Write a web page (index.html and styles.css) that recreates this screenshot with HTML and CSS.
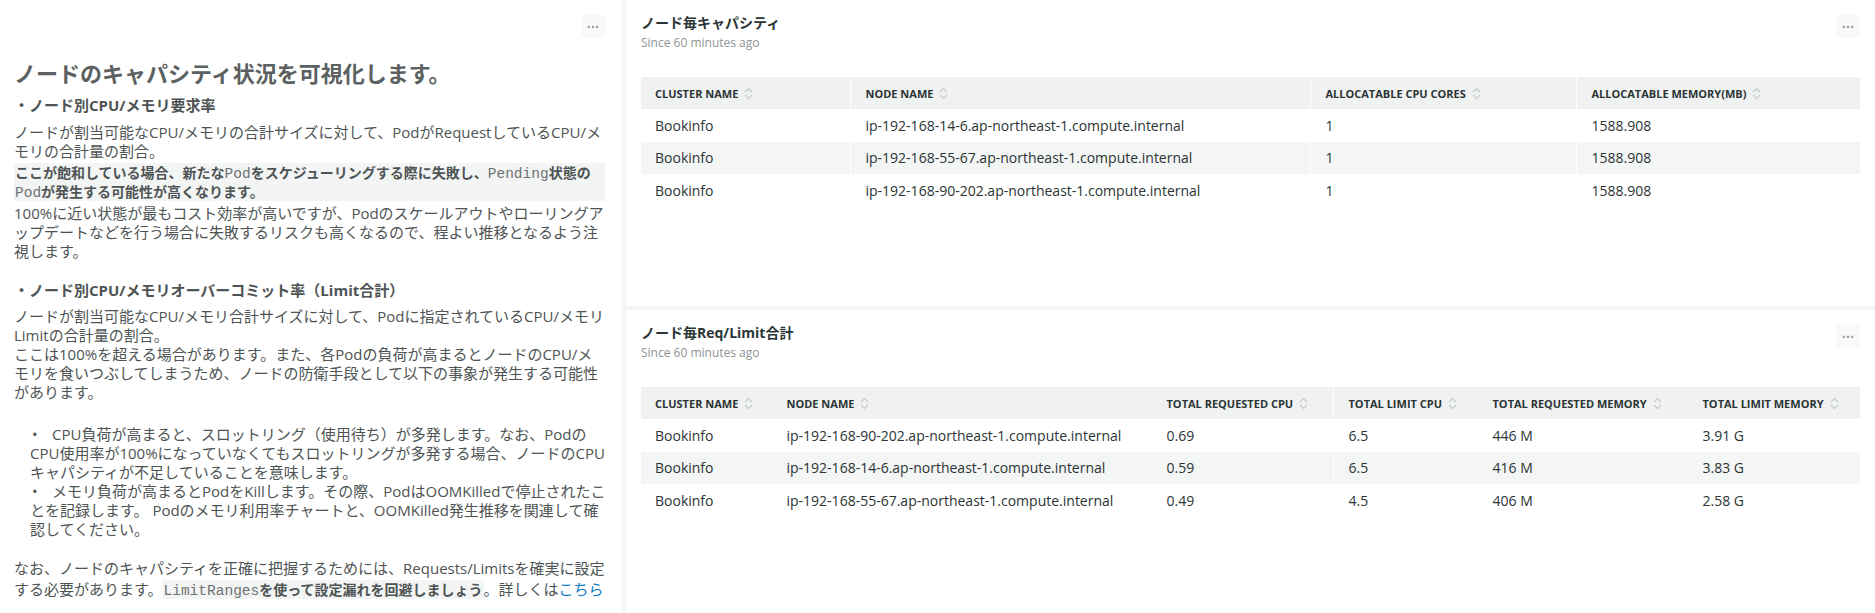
FILE: index.html
```html
<!DOCTYPE html>
<html lang="ja">
<head>
<meta charset="utf-8">
<title>Node capacity</title>
<link rel="stylesheet" href="styles.css">
</head>
<body>
<div class="dash">
  <section class="panel panel-left">
    <div class="left-head">
      <button class="more" type="button" aria-label="more"><svg width="24" height="24" viewBox="0 0 24 24"><rect x="6.8" y="11.8" width="2.2" height="2.2" fill="#9aa0a0"/><rect x="10.9" y="11.8" width="2.2" height="2.2" fill="#9aa0a0"/><rect x="15" y="11.8" width="2.2" height="2.2" fill="#9aa0a0"/></svg></button>
    </div>
    <div class="md">
      <h1 class="md-h1">ノードのキャパシティ状況を可視化します。</h1>
      <p class="md-strong md-sec1">・ノード別CPU/メモリ要求率</p>
      <p class="md-p md-p1">ノードが割当可能なCPU/メモリの合計サイズに対して、PodがRequestしているCPU/メモリの合計量の割合。</p>
      <div class="md-block">ここが飽和している場合、新たな<code class="mono">Pod</code>をスケジューリングする際に失敗し、<code class="mono">Pending</code>状態の<code class="mono">Pod</code>が発生する可能性が高くなります。</div>
      <p class="md-p md-p2">100%に近い状態が最もコスト効率が高いですが、Podのスケールアウトやローリングアップデートなどを行う場合に失敗するリスクも高くなるので、程よい推移となるよう注視します。</p>
      <p class="md-strong md-sec2">・ノード別CPU/メモリオーバーコミット率（Limit合計）</p>
      <p class="md-p md-p3">ノードが割当可能なCPU/メモリ合計サイズに対して、Podに指定されているCPU/メモリLimitの合計量の割合。<br>ここは100%を超える場合があります。また、各Podの負荷が高まるとノードのCPU/メモリを食いつぶしてしまうため、ノードの防衛手段として以下の事象が発生する可能性があります。</p>
      <ul class="md-list">
        <li>CPU負荷が高まると、スロットリング（使用待ち）が多発します。なお、PodのCPU使用率が100%になっていなくてもスロットリングが多発する場合、ノードのCPUキャパシティが不足していることを意味します。</li>
        <li>メモリ負荷が高まるとPodをKillします。その際、PodはOOMKilledで停止されたことを記録します。 Podのメモリ利用率チャートと、OOMKilled発生推移を関連して確認してください。</li>
      </ul>
      <p class="md-p md-p4">なお、ノードのキャパシティを正確に把握するためには、Requests/Limitsを確実に設定する必要があります。<span class="md-inline"><code class="mono">LimitRanges</code>を使って設定漏れを回避しましょう</span>。詳しくは<a class="md-link" href="#">こちら</a></p>
    </div>
  </section>

  <div class="right-col">
    <section class="panel panel-widget">
      <header class="widget-head">
        <div class="widget-titles">
          <h2 class="widget-title">ノード毎キャパシティ</h2>
          <div class="widget-since">Since 60 minutes ago</div>
        </div>
        <button class="more" type="button" aria-label="more"><svg width="24" height="24" viewBox="0 0 24 24"><rect x="6.8" y="11.8" width="2.2" height="2.2" fill="#9aa0a0"/><rect x="10.9" y="11.8" width="2.2" height="2.2" fill="#9aa0a0"/><rect x="15" y="11.8" width="2.2" height="2.2" fill="#9aa0a0"/></svg></button>
      </header>
      <table class="data-table">
        <colgroup><col class="c209"><col class="c460"><col class="c266"><col></colgroup>
        <thead>
          <tr>
            <th class="div-none"><span class="th-in">Cluster name<svg class="sort" width="9" height="13" viewBox="0 0 9 13"><path d="M1 5 L4.5 1.5 L8 5" /><path d="M1 8 L4.5 11.5 L8 8" /></svg></span></th>
            <th><span class="th-in">Node name<svg class="sort" width="9" height="13" viewBox="0 0 9 13"><path d="M1 5 L4.5 1.5 L8 5" /><path d="M1 8 L4.5 11.5 L8 8" /></svg></span></th>
            <th><span class="th-in">Allocatable CPU cores<svg class="sort" width="9" height="13" viewBox="0 0 9 13"><path d="M1 5 L4.5 1.5 L8 5" /><path d="M1 8 L4.5 11.5 L8 8" /></svg></span></th>
            <th><span class="th-in">Allocatable memory(MB)<svg class="sort" width="9" height="13" viewBox="0 0 9 13"><path d="M1 5 L4.5 1.5 L8 5" /><path d="M1 8 L4.5 11.5 L8 8" /></svg></span></th>
          </tr>
        </thead>
        <tbody>
          <tr><td>Bookinfo</td><td>ip-192-168-14-6.ap-northeast-1.compute.internal</td><td>1</td><td>1588.908</td></tr>
          <tr><td>Bookinfo</td><td>ip-192-168-55-67.ap-northeast-1.compute.internal</td><td>1</td><td>1588.908</td></tr>
          <tr><td>Bookinfo</td><td>ip-192-168-90-202.ap-northeast-1.compute.internal</td><td>1</td><td>1588.908</td></tr>
        </tbody>
      </table>
    </section>

    <section class="panel panel-widget">
      <header class="widget-head">
        <div class="widget-titles">
          <h2 class="widget-title">ノード毎Req/Limit合計</h2>
          <div class="widget-since">Since 60 minutes ago</div>
        </div>
        <button class="more" type="button" aria-label="more"><svg width="24" height="24" viewBox="0 0 24 24"><rect x="6.8" y="11.8" width="2.2" height="2.2" fill="#9aa0a0"/><rect x="10.9" y="11.8" width="2.2" height="2.2" fill="#9aa0a0"/><rect x="15" y="11.8" width="2.2" height="2.2" fill="#9aa0a0"/></svg></button>
      </header>
      <table class="data-table">
        <colgroup><col class="c130"><col class="c380"><col class="c182"><col class="c144"><col class="c210"><col></colgroup>
        <thead>
          <tr>
            <th><span class="th-in">Cluster name<svg class="sort" width="9" height="13" viewBox="0 0 9 13"><path d="M1 5 L4.5 1.5 L8 5" /><path d="M1 8 L4.5 11.5 L8 8" /></svg></span></th>
            <th class="div-none"><span class="th-in">Node name<svg class="sort" width="9" height="13" viewBox="0 0 9 13"><path d="M1 5 L4.5 1.5 L8 5" /><path d="M1 8 L4.5 11.5 L8 8" /></svg></span></th>
            <th class="div-none"><span class="th-in">Total requested CPU<svg class="sort" width="9" height="13" viewBox="0 0 9 13"><path d="M1 5 L4.5 1.5 L8 5" /><path d="M1 8 L4.5 11.5 L8 8" /></svg></span></th>
            <th><span class="th-in">Total limit CPU<svg class="sort" width="9" height="13" viewBox="0 0 9 13"><path d="M1 5 L4.5 1.5 L8 5" /><path d="M1 8 L4.5 11.5 L8 8" /></svg></span></th>
            <th class="div-none"><span class="th-in">Total requested memory<svg class="sort" width="9" height="13" viewBox="0 0 9 13"><path d="M1 5 L4.5 1.5 L8 5" /><path d="M1 8 L4.5 11.5 L8 8" /></svg></span></th>
            <th class="div-none"><span class="th-in">Total limit memory<svg class="sort" width="9" height="13" viewBox="0 0 9 13"><path d="M1 5 L4.5 1.5 L8 5" /><path d="M1 8 L4.5 11.5 L8 8" /></svg></span></th>
          </tr>
        </thead>
        <tbody>
          <tr><td>Bookinfo</td><td class="div-none">ip-192-168-90-202.ap-northeast-1.compute.internal</td><td class="div-none">0.69</td><td>6.5</td><td class="div-none">446 M</td><td class="div-none">3.91 G</td></tr>
          <tr><td>Bookinfo</td><td class="div-none">ip-192-168-14-6.ap-northeast-1.compute.internal</td><td class="div-none">0.59</td><td>6.5</td><td class="div-none">416 M</td><td class="div-none">3.83 G</td></tr>
          <tr><td>Bookinfo</td><td class="div-none">ip-192-168-55-67.ap-northeast-1.compute.internal</td><td class="div-none">0.49</td><td>4.5</td><td class="div-none">406 M</td><td class="div-none">2.58 G</td></tr>
        </tbody>
      </table>
    </section>
  </div>
</div>
</body>
</html>
```

FILE: styles.css
```css
* { box-sizing: border-box; }

html, body {
  margin: 0;
  padding: 0;
  background: #f4f5f5;
  font-family: "Open Sans", "Noto Sans CJK JP", sans-serif;
}

.dash {
  display: grid;
  grid-template-columns: 622px 1fr;
  column-gap: 4px;
  width: 1875px;
  height: 613px;
}

.panel {
  background: #ffffff;
}

.right-col {
  display: grid;
  grid-template-rows: 306px 1fr;
  row-gap: 4px;
}

/* ---------- left markdown panel ---------- */
.panel-left {
  padding: 14px 17px 0 14px;
  overflow: hidden;
}

.left-head {
  display: flex;
  justify-content: flex-end;
  height: 24px;
}

.more {
  width: 24px;
  height: 24px;
  padding: 0;
  border: 0;
  border-radius: 4px;
  background: #f8f9f9;
  display: flex;
  align-items: center;
  justify-content: center;
  flex: none;
}

.md {
  color: #4e5454;
  font-size: 15px;
  line-height: 19px;
}

.md-h1 {
  margin: 21px 0 0;
  font-size: 22px;
  line-height: 28px;
  font-weight: 700;
  color: #5b6060;
}

.md-strong {
  margin: 0;
  font-weight: 700;
}

.md-p { margin: 0; }

.md-sec1 { margin-top: 9px; }
.md-p1 { margin-top: 8px; }

.md-block {
  margin-top: 2px;
  background: #f3f4f4;
  padding: 0 0 0 1px;
  font-size: 14px;
  font-weight: 700;
  line-height: 19px;
}

.mono {
  font-family: "Liberation Mono", monospace;
  font-weight: 400;
  font-size: 14.5px;
  line-height: 1;
  color: #6d7272;
}

.md-p2 { margin-top: 3px; }
.md-sec2 { margin-top: 20px; }
.md-p3 { margin-top: 7px; }

.md-list {
  list-style: none;
  margin: 23px -3px 0 0;
  padding: 0 0 0 16px;
}

.md-list li::before {
  content: "•";
  display: inline-block;
  width: 20px;
  padding-left: 2px;
}

.md-p4 { margin-top: 19px; line-height: 21px; }

.md-inline {
  background: #f3f4f4;
  font-size: 14px;
  font-weight: 700;
  padding: 0 1px;
  line-height: 1;
}

.md-link {
  color: #0b7ac9;
  text-decoration: none;
}

/* ---------- widgets ---------- */
.panel-widget {
  padding: 13px 15px 0 15px;
}

.widget-head {
  display: flex;
  justify-content: space-between;
  align-items: flex-start;
}

.widget-head .more { margin-top: 1px; }

.widget-title {
  margin: 0;
  font-size: 14px;
  line-height: 20px;
  font-weight: 700;
  color: #2a3434;
}

.widget-since {
  margin-top: 2px;
  font-size: 12px;
  line-height: 16px;
  color: #8e9494;
}

.data-table {
  margin-top: 26px;
  width: 100%;
  border-collapse: collapse;
  table-layout: fixed;
}

.c209 { width: 209px; }
.c460 { width: 460px; }
.c266 { width: 266px; }
.c130 { width: 130px; }
.c380 { width: 380px; }
.c182 { width: 182px; }
.c144 { width: 144px; }
.c210 { width: 210px; }

.data-table th {
  height: 32px;
  padding: 0 0 0 15px;
  background: #f0f1f1;
  text-align: left;
  font-size: 11px;
  font-weight: 700;
  text-transform: uppercase;
  color: #2a3434;
  white-space: nowrap;
  border-left: 1px solid #ffffff;
}

.data-table th:first-child,
.data-table td:first-child { padding-left: 14px; border-left: 0; }

.data-table th.div-none,
.data-table td.div-none { border-left-color: transparent; }

.th-in {
  display: inline-flex;
  align-items: center;
}

.sort {
  margin-left: 6px;
  fill: none;
  stroke: #c6cbcb;
  stroke-width: 1.1;
}

.data-table td {
  height: 32.5px;
  padding: 0 0 0 15px;
  font-size: 14px;
  color: #2a3434;
  white-space: nowrap;
  border-left: 1px solid #ffffff;
}

.data-table tbody tr:nth-child(even) td { background: #f4f5f5; }
```
